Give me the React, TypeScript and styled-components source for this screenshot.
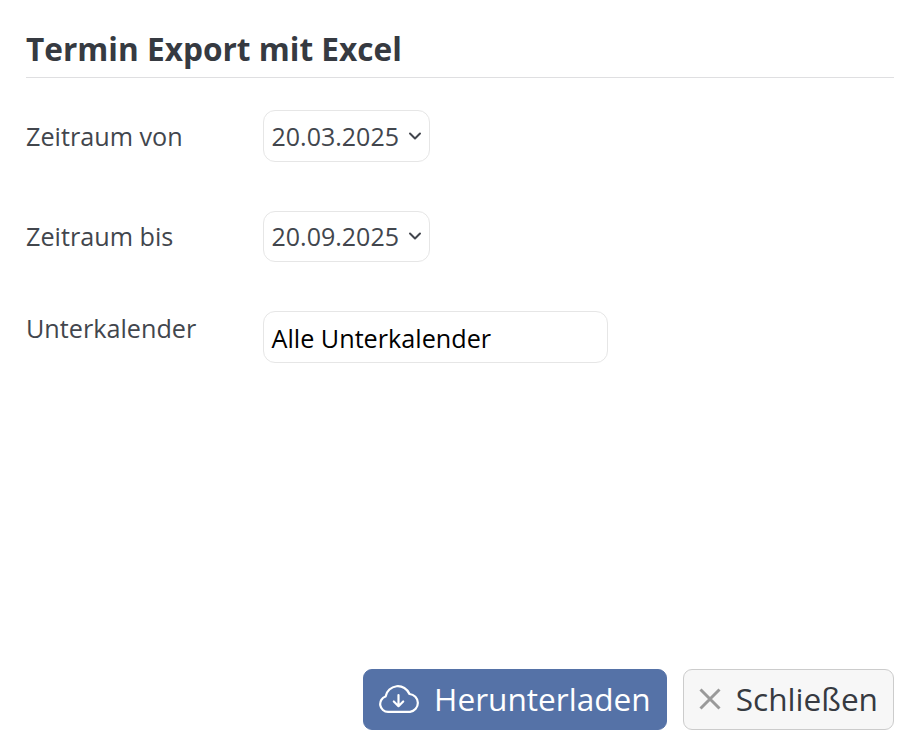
import styled, { createGlobalStyle } from "styled-components";

const GlobalStyle = createGlobalStyle`
  html, body {
    margin: 0;
    padding: 0;
    background: #fff;
  }
  body {
    font-family: "Open Sans", "Liberation Sans", sans-serif;
  }
`;

const Page = styled.div`
  display: flex;
  flex-direction: column;
  box-sizing: border-box;
  width: 914px;
  height: 754px;
  padding: 0 20px 24px 26px;
`;

const Title = styled.h1`
  margin: 0;
  padding-top: 28px;
  height: 49px;
  box-sizing: content-box;
  border-bottom: 1px solid #dfdfe1;
  font-size: 31.6px;
  line-height: 41px;
  font-weight: 700;
  color: #363a41;
`;

const Form = styled.div`
  display: flex;
  flex-direction: column;
  gap: 49px;
  padding-top: 32px;
`;

const Row = styled.div<{ $top?: boolean }>`
  display: flex;
  align-items: ${(p) => (p.$top ? "flex-start" : "center")};
`;

const Label = styled.div`
  width: 237px;
  font-size: 25.2px;
  line-height: 34px;
  color: #42464d;
`;

const DateSelect = styled.div`
  display: flex;
  align-items: center;
  justify-content: space-between;
  box-sizing: border-box;
  width: 167px;
  height: 51.5px;
  padding: 0 7px 0 7.5px;
  border: 1.5px solid #e6e6e6;
  border-radius: 12px;
  background: #fff;
  font-size: 25px;
  color: #42464d;
`;

const TextField = styled.div`
  display: flex;
  align-items: center;
  box-sizing: border-box;
  width: 345px;
  height: 52px;
  padding: 1px 7.5px 0;
  border: 1.5px solid #e6e6e6;
  border-radius: 12px;
  background: #fff;
  font-size: 25.2px;
  color: #000;
`;

const Footer = styled.div`
  display: flex;
  justify-content: flex-end;
  gap: 16px;
  margin-top: auto;
`;

const Button = styled.div<{ $primary?: boolean }>`
  display: flex;
  align-items: center;
  box-sizing: border-box;
  height: 61px;
  padding: 0 15px 2px;
  gap: 15px;
  border-radius: 9px;
  border: 1.5px solid ${(p) => (p.$primary ? "#5572a7" : "#cccccc")};
  background: ${(p) => (p.$primary ? "#5572a7" : "#f7f7f7")};
  color: ${(p) => (p.$primary ? "#ffffff" : "#363a41")};
  font-size: 31.6px;
`;

const Chevron = () => (
  <svg width="14" height="10" viewBox="0 0 14 10" fill="none" stroke="#42464d" strokeWidth="2" strokeLinecap="round" strokeLinejoin="round">
    <path d="M2 2.5l5 5 5-5" />
  </svg>
);

const CloudDownload = () => (
  <svg width="40" height="29" viewBox="0 0 40 29" fill="none" stroke="#fff" strokeWidth="2.2" strokeLinecap="round" strokeLinejoin="round">
    <path d="M9 27.900A7.900 7.900 0 0 1 6.600 12.500A12.500 12.500 0 0 1 30.500 10A9 9 0 0 1 31 27.900Z" />
    <path d="M19.500 11v11M14.800 17.500l4.700 4.700 4.700-4.700" />
  </svg>
);

const CloseIcon = () => (
  <svg width="22" height="22" viewBox="0 0 22 22" fill="none" stroke="#9a9a9a" strokeWidth="3">
    <path d="M1.500 1.500l19 19M20.500 1.500l-19 19" />
  </svg>
);

export default function App() {
  return (
    <>
      <GlobalStyle />
      <Page>
        <Title>Termin Export mit Excel</Title>
        <Form>
          <Row>
            <Label>Zeitraum von</Label>
            <DateSelect>
              20.03.2025
              <Chevron />
            </DateSelect>
          </Row>
          <Row>
            <Label>Zeitraum bis</Label>
            <DateSelect>
              20.09.2025
              <Chevron />
            </DateSelect>
          </Row>
          <Row $top>
            <Label>Unterkalender</Label>
            <TextField>Alle Unterkalender</TextField>
          </Row>
        </Form>
        <Footer>
          <Button $primary>
            <CloudDownload />
            Herunterladen
          </Button>
          <Button>
            <CloseIcon />
            Schließen
          </Button>
        </Footer>
      </Page>
    </>
  );
}
